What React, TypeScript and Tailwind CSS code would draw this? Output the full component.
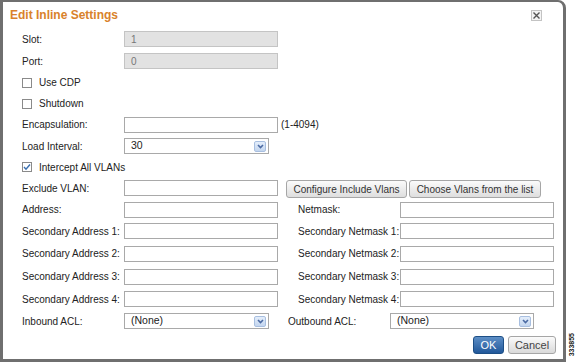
import React from 'react'

const font = { fontFamily: '"Liberation Sans", Arial, sans-serif' }

function TextInput({ value = '', disabled = false, w = 'w-[154px]' }: { value?: string; disabled?: boolean; w?: string }) {
  return (
    <div
      className={`${w} h-[16px] border flex items-center px-[6px] text-[10px] ${
        disabled ? 'bg-[#e2e2e2] border-[#c4c4c4] text-[#777]' : 'bg-white border-[#a9a9a9] text-[#222]'
      }`}
    >
      {value}
    </div>
  )
}

function Select({ value, w = 'w-[145px]' }: { value: string; w?: string }) {
  return (
    <div className={`${w} h-[16px] border border-[#a9a9a9] bg-white flex items-center justify-between pl-[6px] pr-[2px] text-[10.5px] text-[#222]`}>
      <span>{value}</span>
      <span className="w-[12px] h-[11px] rounded-[2px] bg-gradient-to-b from-[#e4eefb] to-[#c3d5ee] border border-[#a8bfe0] flex items-center justify-center">
        <svg width="7" height="5" viewBox="0 0 7 5">
          <path d="M1 1 L3.5 3.5 L6 1" fill="none" stroke="#4b6aa3" strokeWidth="1.6" />
        </svg>
      </span>
    </div>
  )
}

function Checkbox({ checked = false, label }: { checked?: boolean; label: string }) {
  return (
    <div className="flex items-center gap-[7px] pl-[22px]">
      <span className="w-[10px] h-[10px] border border-[#8a8a8a] bg-white flex items-center justify-center">
        {checked && (
          <svg width="8" height="8" viewBox="0 0 8 8">
            <path d="M1 4 L3 6.2 L7 1.5" fill="none" stroke="#3a6fb0" strokeWidth="1.4" />
          </svg>
        )}
      </span>
      <span className="text-[10px] text-[#222] whitespace-nowrap">{label}</span>
    </div>
  )
}

function GrayButton({ children, w }: { children: React.ReactNode; w: string }) {
  return (
    <div
      className={`${w} h-[18px] rounded-[3px] border border-[#a6a6a6] bg-gradient-to-b from-[#fbfbfb] to-[#dedede] flex items-center justify-center text-[10px] text-[#333] whitespace-nowrap`}
    >
      {children}
    </div>
  )
}

function Row({ h, children }: { h: string; children: React.ReactNode }) {
  return <div className={`${h} flex items-center`}>{children}</div>
}

function Label({ children, w = 'w-[102px]' }: { children: React.ReactNode; w?: string }) {
  return <span className={`${w} text-[10px] text-[#222] shrink-0 whitespace-nowrap`}>{children}</span>
}

function PairRow({ h, left, right }: { h: string; left: string; right: string }) {
  return (
    <Row h={h}>
      <div className="pl-[22px] flex items-center">
        <Label>{left}</Label>
        <TextInput />
      </div>
      <div className="pl-[20px] flex items-center">
        <Label>{right}</Label>
        <TextInput />
      </div>
    </Row>
  )
}

export default function App() {
  return (
    <div className="w-[576px] h-[364px] bg-white flex" style={font}>
      <div className="w-[566px] h-[362px] border-[3px] border-t-[2px] border-[#6f6f6f] rounded-tr-[8px] bg-white flex flex-col">
        <div className="h-[26px] flex items-center justify-between pl-[7px] pr-[21px]">
          <span className="text-[12px] font-bold text-[#d9822b]">Edit Inline Settings</span>
          <svg width="11" height="11" viewBox="0 0 11 11">
            <rect x="0.5" y="0.5" width="10" height="10" fill="#f4f4f4" stroke="#8c8c8c" strokeDasharray="1 1" />
            <path d="M2.5 2.5 L8.5 8.5 M8.5 2.5 L2.5 8.5" stroke="#555" strokeWidth="1.4" />
          </svg>
        </div>

        <Row h="h-[22px]">
          <div className="pl-[19px] flex items-center">
            <Label>Slot:</Label>
            <TextInput value="1" disabled />
          </div>
        </Row>
        <Row h="h-[22px]">
          <div className="pl-[19px] flex items-center">
            <Label>Port:</Label>
            <TextInput value="0" disabled />
          </div>
        </Row>
        <Row h="h-[21px]">
          <div className="-ml-[3px]">
            <Checkbox label="Use CDP" />
          </div>
        </Row>
        <Row h="h-[21px]">
          <div className="-ml-[3px]">
            <Checkbox label="Shutdown" />
          </div>
        </Row>
        <Row h="h-[21px]">
          <div className="pl-[19px] flex items-center">
            <Label>Encapsulation:</Label>
            <TextInput />
            <span className="ml-[3px] text-[10px] text-[#222]">(1-4094)</span>
          </div>
        </Row>
        <Row h="h-[22px]">
          <div className="pl-[19px] flex items-center">
            <Label>Load Interval:</Label>
            <Select value="30" />
          </div>
        </Row>
        <Row h="h-[20px]">
          <div className="-ml-[3px]">
            <Checkbox checked label="Intercept All VLANs" />
          </div>
        </Row>
        <Row h="h-[22px]">
          <div className="pl-[19px] flex items-center">
            <Label>Exclude VLAN:</Label>
            <TextInput />
            <div className="ml-[8px] flex gap-[2px] mt-[2px]">
              <GrayButton w="w-[121px]">Configure Include Vlans</GrayButton>
              <GrayButton w="w-[132px]">Choose Vlans from the list</GrayButton>
            </div>
          </div>
        </Row>
        <div className="-ml-[3px] flex flex-col">
          <PairRow h="h-[21px]" left="Address:" right="Netmask:" />
          <PairRow h="h-[22px]" left="Secondary Address 1:" right="Secondary Netmask 1:" />
          <PairRow h="h-[23px]" left="Secondary Address 2:" right="Secondary Netmask 2:" />
          <PairRow h="h-[23px]" left="Secondary Address 3:" right="Secondary Netmask 3:" />
          <PairRow h="h-[22px]" left="Secondary Address 4:" right="Secondary Netmask 4:" />
          <Row h="h-[22px]">
            <div className="pl-[22px] flex items-center">
              <Label>Inbound ACL:</Label>
              <Select value="(None)" />
            </div>
            <div className="pl-[19px] flex items-center">
              <Label>Outbound ACL:</Label>
              <Select value="(None)" w="w-[144px]" />
            </div>
          </Row>
        </div>
        <div className="flex justify-end gap-[4px] pr-[7px] mt-[4px]">
          <div className="w-[31px] h-[18px] rounded-[3px] border border-[#1d4f86] bg-gradient-to-b from-[#5d8fc6] to-[#21589a] flex items-center justify-center text-[11px] text-white">
            OK
          </div>
          <div className="w-[48px] h-[18px] rounded-[3px] border border-[#a6a6a6] bg-gradient-to-b from-[#fbfbfb] to-[#dadada] flex items-center justify-center text-[11px] text-[#444]">
            Cancel
          </div>
        </div>
      </div>
      <div className="flex-1 flex items-end pb-[8px] justify-center">
        <span className="text-[7px] font-bold text-[#222] [writing-mode:vertical-rl] rotate-180 leading-none">333855</span>
      </div>
    </div>
  )
}
